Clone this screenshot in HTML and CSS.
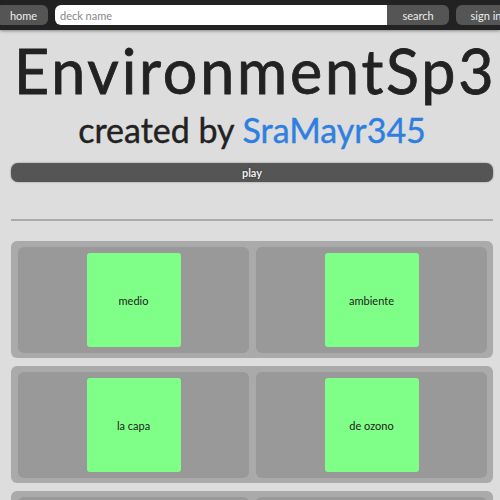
FILE: index.html
```html
<!DOCTYPE html>
<html lang="en">
<head>
    <meta charset="UTF-8">
    <meta name="viewport" content="width=device-width, initial-scale=1.0">
    <title>EnvironmentSp3</title>
    <link rel="stylesheet" href="styles.css">
</head>
<body>
    <nav class="topbar">
        <button class="nav-btn home-btn">home</button>
        <div class="search-box">
            <input type="text" class="search-input" placeholder="deck name">
            <button class="nav-btn search-btn">search</button>
        </div>
        <button class="nav-btn signin-btn">sign in</button>
    </nav>

    <main class="page">
        <h1 class="deck-title">EnvironmentSp3</h1>
        <p class="deck-author">created by <a href="#" class="author-link">SraMayr345</a></p>

        <button class="play-btn">play</button>

        <hr class="divider">

        <div class="card-row">
            <div class="card-cell"><div class="card">medio</div></div>
            <div class="card-cell"><div class="card">ambiente</div></div>
        </div>
        <div class="card-row">
            <div class="card-cell"><div class="card">la capa</div></div>
            <div class="card-cell"><div class="card">de ozono</div></div>
        </div>
        <div class="card-row">
            <div class="card-cell"><div class="card"></div></div>
            <div class="card-cell"><div class="card"></div></div>
        </div>
    </main>
</body>
</html>
```

FILE: styles.css
```css
:root {
    --bar: #222222;
    --button: #555555;
    --background: #dddddd;
    --row: #aaaaaa;
    --cell: #999999;
    --card: #80ff88;
    --link: #2f7fe0;
}

body {
    font-family: Lato, 'Open Sans', sans-serif;
    margin: 0;
    padding: 0;
    background: var(--background);
    overflow: hidden;
}

.topbar {
    height: 30px;
    background: var(--bar);
    display: flex;
    align-items: center;
    box-shadow: 0 1px 3px rgba(0, 0, 0, 0.4);
}

.nav-btn {
    height: 20px;
    border: none;
    background: var(--button);
    color: #eeeeee;
    font-family: inherit;
    font-size: 11px;
    padding: 0;
    flex-shrink: 0;
    cursor: pointer;
}

.home-btn {
    width: 52px;
    margin-left: -4px;
    padding-left: 3px;
    border-radius: 6px;
}

.search-box {
    display: flex;
    flex-shrink: 0;
    margin-left: 7px;
}

.search-input {
    width: 332px;
    height: 20px;
    box-sizing: border-box;
    border: none;
    border-radius: 6px 0 0 6px;
    padding: 0 5px;
    font-family: inherit;
    font-size: 11px;
    outline: none;
}

.search-input::placeholder {
    color: #888888;
}

.search-btn {
    width: 62px;
    border-radius: 0 6px 6px 0;
}

.signin-btn {
    width: 60px;
    margin-left: 7px;
    border-radius: 6px;
}

.page {
    padding: 0 7px 0 11px;
}

.deck-title {
    margin: 0;
    padding-top: 6px;
    padding-left: 3px;
    text-align: center;
    font-size: 61px;
    font-weight: 400;
    letter-spacing: 2.8px;
    line-height: 70px;
    color: #222222;
    -webkit-text-stroke: 0.8px #222222;
}

.deck-author {
    margin: 0;
    margin-top: 4px;
    text-align: center;
    font-size: 34px;
    line-height: 40px;
    color: #222222;
    -webkit-text-stroke: 0.4px currentColor;
}

.author-link {
    color: var(--link);
    text-decoration: none;
}

.play-btn {
    display: block;
    width: 482px;
    height: 19px;
    margin-top: 13px;
    border: none;
    border-radius: 7px;
    background: var(--button);
    color: #eeeeee;
    font-family: inherit;
    font-size: 11px;
    font-weight: 700;
    text-shadow: 0 0 2px rgba(0, 0, 0, 0.6);
    box-shadow: 0 0 2px rgba(0, 0, 0, 0.4);
    cursor: pointer;
}

.divider {
    margin: 37px 0 20px 0;
    border: none;
    border-top: 2px solid #aaaaaa;
}

.card-row {
    display: grid;
    grid-template-columns: 1fr 1fr;
    gap: 7px;
    padding: 6px 6px 5px 7px;
    margin-bottom: 8px;
    background: var(--row);
    border-radius: 6px;
}

.card-cell {
    background: var(--cell);
    border-radius: 6px;
    padding: 6px 0;
    display: flex;
    justify-content: center;
}

.card {
    width: 94px;
    height: 94px;
    background: var(--card);
    border-radius: 3px;
    display: flex;
    align-items: center;
    justify-content: center;
    font-size: 11px;
    color: #222222;
}
```
